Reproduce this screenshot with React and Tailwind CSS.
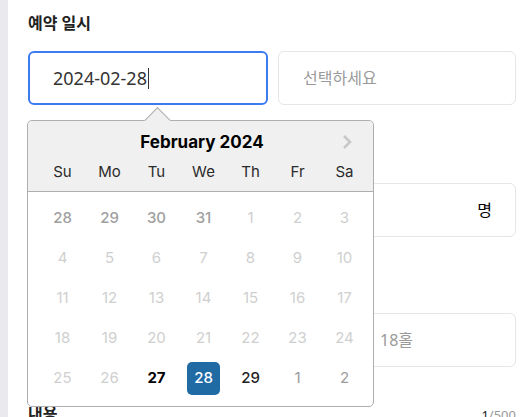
import React from 'react';

const KR = { fontFamily: '"Noto Sans", "Noto Sans CJK KR", sans-serif' };
const CAL = { fontFamily: 'Inter, "Liberation Sans", sans-serif' };

const DAY_NAMES = ['Su', 'Mo', 'Tu', 'We', 'Th', 'Fr', 'Sa'];

// tone: prev = leading Jan days, off = disabled, next = trailing Mar days
const WEEKS = [
  [['28', 'prev'], ['29', 'prev'], ['30', 'prev'], ['31', 'prev'], ['1', 'off'], ['2', 'off'], ['3', 'off']],
  [['4', 'off'], ['5', 'off'], ['6', 'off'], ['7', 'off'], ['8', 'off'], ['9', 'off'], ['10', 'off']],
  [['11', 'off'], ['12', 'off'], ['13', 'off'], ['14', 'off'], ['15', 'off'], ['16', 'off'], ['17', 'off']],
  [['18', 'off'], ['19', 'off'], ['20', 'off'], ['21', 'off'], ['22', 'off'], ['23', 'off'], ['24', 'off']],
  [['25', 'off'], ['26', 'off'], ['27', 'today'], ['28', 'selected'], ['29', 'on'], ['1', 'next'], ['2', 'next']],
];

function Day({ label, tone }) {
  if (tone === 'selected') {
    return (
      <div className="flex items-center justify-center h-10">
        <span className="w-[33px] h-[33px] rounded-[5px] bg-[#216ba5] text-white font-medium flex items-center justify-center">
          {label}
        </span>
      </div>
    );
  }
  const cls = {
    prev: 'text-[#a0a0a0] font-medium',
    off: 'text-[#cfcfcf]',
    today: 'text-black font-bold',
    on: 'text-[#222] font-medium',
    next: 'text-[#9c9c9c]',
  }[tone];
  return <div className={`flex items-center justify-center h-10 ${cls}`}>{label}</div>;
}

function Calendar() {
  return (
    <div
      className="absolute left-[19px] top-[120px] w-[347px] bg-white border border-[#aeaeae] rounded-[5px] z-10"
      style={CAL}
    >
      <div className="absolute left-[120px] -top-[10px] w-[19px] h-[19px] rotate-45 bg-[#f0f0f0] border-l border-t border-[#aeaeae]" />
      <div className="relative bg-[#f0f0f0] border-b border-[#aeaeae] rounded-t-[5px] h-[71px] pl-[11px] pr-[5px]">
        <div className="text-center text-[17px] font-bold text-black pt-[9px] leading-6 pr-[3px]">February 2024</div>
        <svg className="absolute right-[21px] top-[13px]" width="10" height="16" viewBox="0 0 10 16">
          <path d="M2 2l6 6-6 6" fill="none" stroke="#c8c8c8" strokeWidth="2.6" />
        </svg>
        <div className="grid grid-cols-7 mt-[6px] text-[15px] text-[#2a2a2a]">
          {DAY_NAMES.map((d) => (
            <div key={d} className="text-center leading-6">{d}</div>
          ))}
        </div>
      </div>
      <div className="pl-[11px] pr-[5px] pt-[6px] pb-[8px] grid grid-cols-7 text-[15px]">
        {WEEKS.flat().map(([label, tone], i) => (
          <Day key={i} label={label} tone={tone} />
        ))}
      </div>
    </div>
  );
}

export default function App() {
  return (
    <div className="w-[528px] h-[417px] overflow-hidden flex bg-white" style={KR}>
      <div className="w-2 bg-[#e9e9ee] shrink-0" />
      <div className="relative flex-1 pl-5 pr-3 pt-[11px]">
        <div className="text-[16px] font-bold text-[#222] leading-6">예약 일시</div>
        <div className="flex gap-[10px] mt-[16px]">
          <div className="w-[240px] h-[54px] border-2 border-[#3b7cf0] rounded-[6px] flex items-center pl-[23px] text-[18px] text-[#333]">
            2024-02-28<span className="inline-block w-px h-[21px] bg-[#333] ml-px" />
          </div>
          <div className="flex-1 h-[54px] border border-[#e6e6e6] rounded-[6px] flex items-center pl-[24px] text-[16px] text-[#9a9a9a]">
            선택하세요
          </div>
        </div>

        <div className="text-[16px] font-bold text-[#222] leading-6 mt-[30px]">인원</div>
        <div className="h-[54px] mt-[24px] border border-[#e6e6e6] rounded-[6px] flex items-center justify-end pr-[23px] text-[16px] text-black">
          명
        </div>

        <div className="text-[16px] font-bold text-[#222] leading-6 mt-[28px]">코스</div>
        <div className="flex gap-[10px] mt-[24px]">
          <div className="flex-1 h-[54px] border border-[#e6e6e6] rounded-[6px]" />
          <div className="flex-1 h-[54px] border border-[#e6e6e6] rounded-[6px]" />
          <div className="w-[161px] h-[54px] border border-[#e6e6e6] rounded-[6px] flex items-center pl-[24px] text-[16px] text-[#9a9a9a]">
            18홀
          </div>
        </div>

        <div className="flex items-start justify-between mt-[34px]">
          <div className="text-[16px] font-bold text-[#222] leading-6">내용</div>
          <div className="text-[13px] text-[#999] mt-[5px]">
            <span className="text-[#222]">1</span>/500
          </div>
        </div>

        <Calendar />
      </div>
    </div>
  );
}
